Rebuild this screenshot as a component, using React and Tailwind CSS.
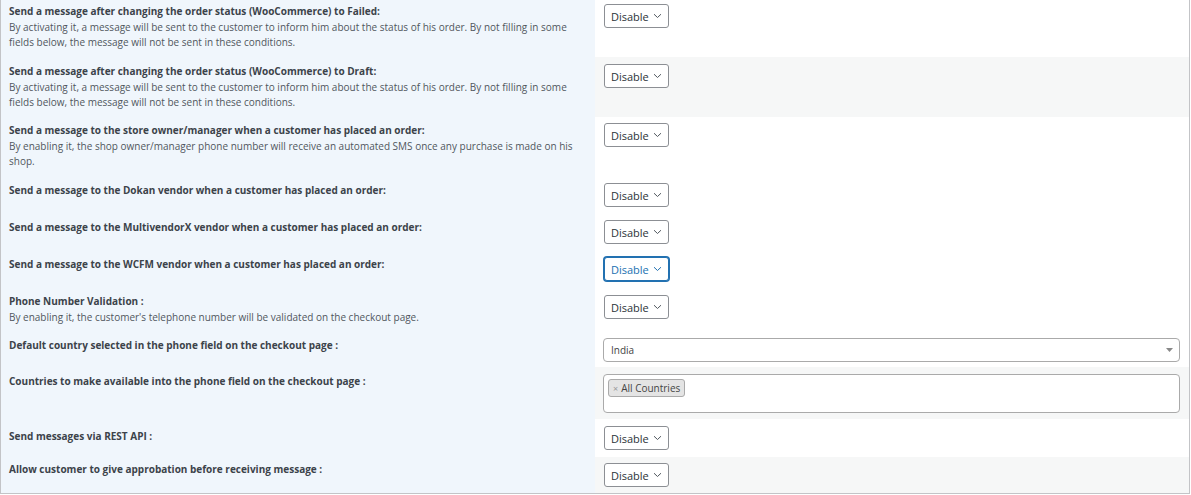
const rows = [
  {
    title: "Send a message after changing the order status (WooCommerce) to Failed:",
    desc: [
      "By activating it, a message will be sent to the customer to inform him about the status of his order. By not filling in some",
      "fields below, the message will not be sent in these conditions.",
    ],
    h: "h-[57px]", lpt: "pt-[4px]", cpt: "pt-[4px]", bg: "bg-white", ctl: "select",
  },
  {
    title: "Send a message after changing the order status (WooCommerce) to Draft:",
    desc: [
      "By activating it, a message will be sent to the customer to inform him about the status of his order. By not filling in some",
      "fields below, the message will not be sent in these conditions.",
    ],
    h: "h-[60px]", lpt: "pt-[7px]", cpt: "pt-[7px]", bg: "bg-[#f6f7f7]", ctl: "select",
  },
  {
    title: "Send a message to the store owner/manager when a customer has placed an order:",
    desc: [
      "By enabling it, the shop owner/manager phone number will receive an automated SMS once any purchase is made on his",
      "shop.",
    ],
    h: "h-[60px]", lpt: "pt-[6px]", cpt: "pt-[6px]", bg: "bg-white", ctl: "select",
  },
  {
    title: "Send a message to the Dokan vendor when a customer has placed an order:",
    h: "h-[37px]", lpt: "pt-[6px]", cpt: "pt-[6px]", bg: "bg-white", ctl: "select",
  },
  {
    title: "Send a message to the MultivendorX vendor when a customer has placed an order:",
    h: "h-[37px]", lpt: "pt-[6px]", cpt: "pt-[6px]", bg: "bg-white", ctl: "select",
  },
  {
    title: "Send a message to the WCFM vendor when a customer has placed an order:",
    h: "h-[37px]", lpt: "pt-[6px]", cpt: "pt-[6px]", bg: "bg-white", ctl: "focus",
  },
  {
    title: "Phone Number Validation :",
    desc: ["By enabling it, the customer's telephone number will be validated on the checkout page."],
    h: "h-[43px]", lpt: "pt-[6px]", cpt: "pt-[7px]", bg: "bg-white", ctl: "select",
  },
  {
    title: "Default country selected in the phone field on the checkout page :",
    h: "h-[36px]", lpt: "pt-[7px]", cpt: "pt-[7px]", bg: "bg-white", ctl: "country",
  },
  {
    title: "Countries to make available into the phone field on the checkout page :",
    h: "h-[52px]", lpt: "pt-[7px]", cpt: "pt-[7px]", bg: "bg-[#f6f7f7]", ctl: "multi",
  },
  {
    title: "Send messages via REST API :",
    h: "h-[38px]", lpt: "pt-[10px]", cpt: "pt-[7px]", bg: "bg-white", ctl: "select",
  },
  {
    title: "Allow customer to give approbation before receiving message :",
    h: "h-[36px]", lpt: "pt-[5px]", cpt: "pt-[6px]", bg: "bg-[#f6f7f7]", ctl: "select",
  },
];

function Chevron({ color }) {
  return (
    <svg width="9" height="6" viewBox="0 0 9 6" fill="none">
      <path d="M1 1.2 L4.5 4.5 L8 1.2" stroke={color} strokeWidth="1" />
    </svg>
  );
}

function DisableSelect({ focus }) {
  return (
    <div
      className={
        "flex h-[24px] w-[65px] items-center justify-between rounded-[3px] border bg-white pl-[6px] pr-[6px] text-[11px] " +
        (focus
          ? "border-[#2271b1] text-[#2271b1] shadow-[0_0_0_1px_#2271b1]"
          : "border-[#8c8f94] text-[#2c3338]")
      }
    >
      <span className="leading-none">Disable</span>
      <Chevron color={focus ? "#2271b1" : "#50575e"} />
    </div>
  );
}

function CountrySelect() {
  return (
    <div className="flex h-[24px] w-full items-center justify-between rounded-[4px] border border-[#aaaaaa] bg-white pl-[7px] pr-[6px] text-[10px] text-[#444]">
      <span className="leading-none">India</span>
      <svg width="7" height="4" viewBox="0 0 7 4">
        <path d="M0 0 L7 0 L3.5 4 Z" fill="#888" />
      </svg>
    </div>
  );
}

function MultiSelect() {
  return (
    <div className="flex h-[39px] w-full items-start rounded-[4px] border border-[#aaaaaa] bg-white pl-[4px] pt-[4px]">
      <div className="flex h-[18px] items-center gap-[3px] rounded-[3px] border border-[#aaaaaa] bg-[#e4e4e4] pl-[4px] pr-[4px] text-[10px] leading-none text-[#444]">
        <span className="text-[9px] text-[#999]">×</span>
        <span>All Countries</span>
      </div>
    </div>
  );
}

export default function App() {
  return (
    <div className="w-[1191px] h-[495px] bg-white" style={{ fontFamily: "'Open Sans', sans-serif" }}>
      <div className="w-[1190px] border-l border-r border-b border-[#c3c4c7]">
        {rows.map((r, i) => (
          <div key={i} className={"flex " + r.h}>
            <div className={"w-[594px] shrink-0 bg-[#f0f6fc] pl-[8px] " + r.lpt}>
              <div className="whitespace-nowrap text-[10px] font-bold leading-[15px] text-[#3c434a]">{r.title}</div>
              {r.desc && (
                <div className="mt-[1px] text-[10px] leading-[15px] text-[#50575e]">
                  {r.desc.map((l, j) => (
                    <div key={j} className="whitespace-nowrap">{l}</div>
                  ))}
                </div>
              )}
            </div>
            <div
              className={
                "flex-1 " +
                r.bg +
                " " +
                r.cpt +
                " " +
                (r.ctl === "country" || r.ctl === "multi" ? "pl-[8px] pr-[9px]" : "pl-[9px]")
              }
            >
              {r.ctl === "select" && <DisableSelect />}
              {r.ctl === "focus" && <DisableSelect focus />}
              {r.ctl === "country" && <CountrySelect />}
              {r.ctl === "multi" && <MultiSelect />}
            </div>
          </div>
        ))}
      </div>
    </div>
  );
}
